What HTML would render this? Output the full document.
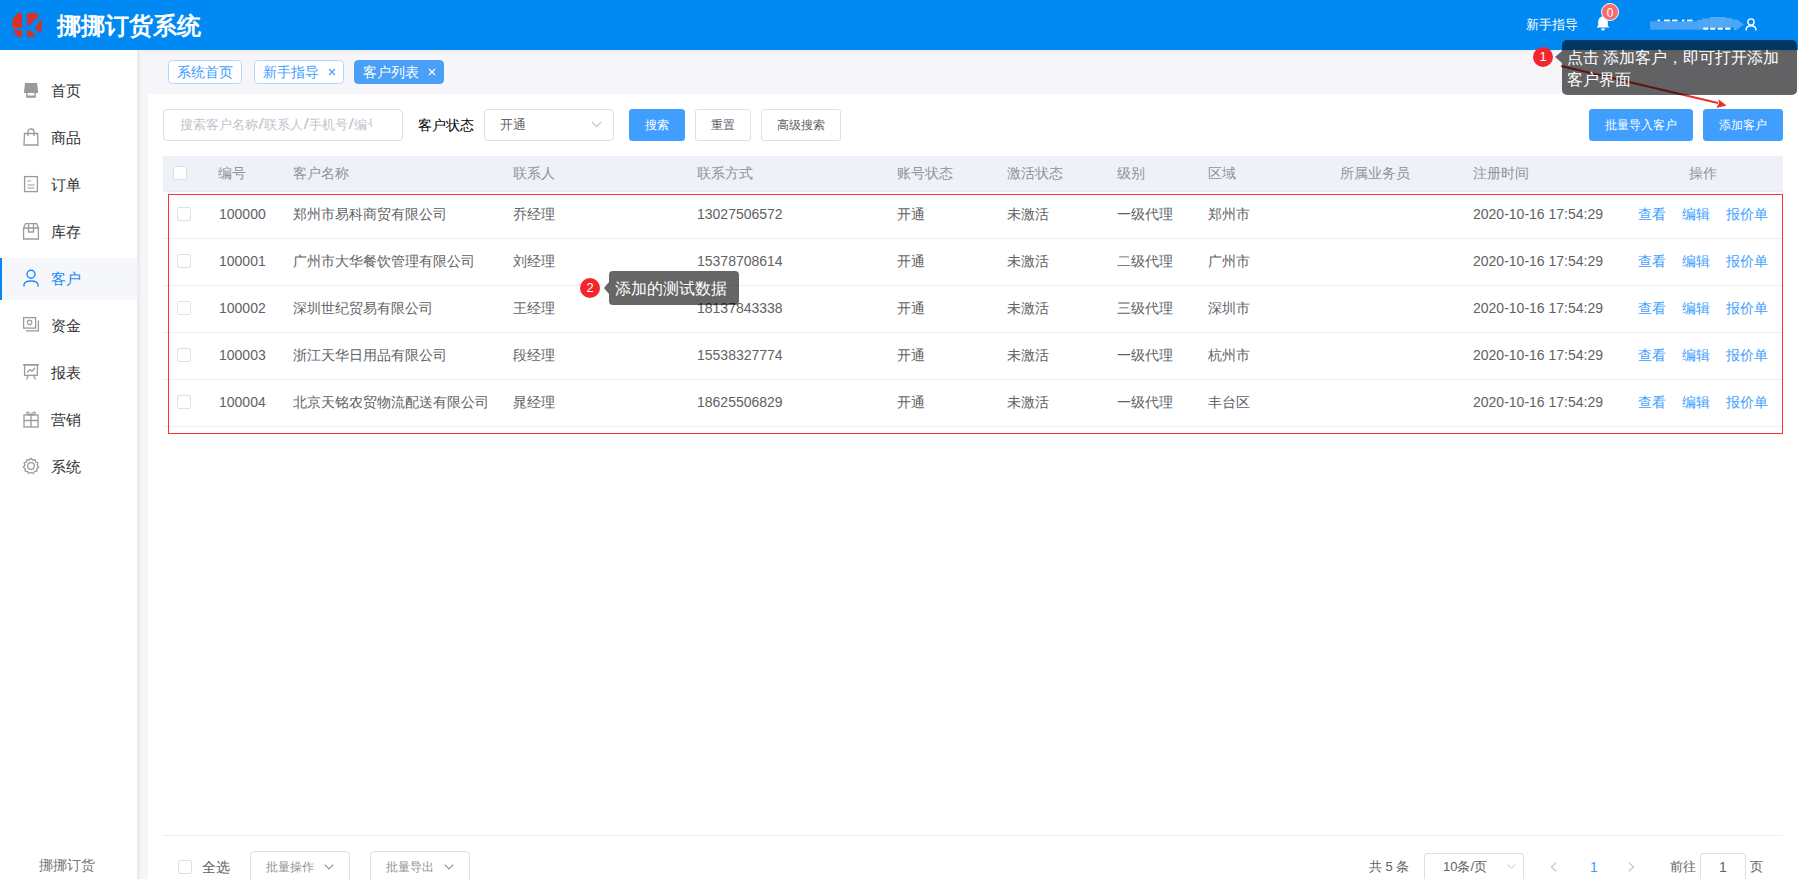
<!DOCTYPE html>
<html><head><meta charset="utf-8"><title>挪挪订货系统</title>
<style>
html,body{margin:0;padding:0;}
body{width:1798px;height:879px;overflow:hidden;position:relative;background:#fff;font-family:"Liberation Sans", sans-serif;}
.t{position:absolute;white-space:nowrap;}
.b{position:absolute;}
</style></head><body>
<div class="b" style="left:0px;top:0px;width:1798px;height:50px;background:#0089f2;"></div>
<svg class="b" style="left:8px;top:8px" width="40" height="34" viewBox="8 8 40 34">
<defs><clipPath id="lc"><circle cx="27" cy="24.9" r="15"/></clipPath></defs>
<g clip-path="url(#lc)" fill="#d8312a">
<polygon points="0,12.95 22.1,12.95 22.1,27.7 0,27.7"/>
<polygon points="0,28.9 22.1,30.2 22.1,36.9 0,36.9"/>
<polygon points="27,12.95 42.75,12.95 27,27"/>
<polygon points="34.9,28.1 45,13.9 45,38.9"/>
<polygon points="27,30.8 31.4,30.8 35.9,36.9 27,36.9"/>
</g>
</svg>
<div class="t" style="left:57px;top:11.0px;font-size:24px;line-height:30px;color:#fff;font-weight:bold;">挪挪订货系统</div>
<div class="t" style="left:1526px;top:14.5px;font-size:13px;line-height:20px;color:#fff;">新手指导</div>
<svg class="b" style="left:1596px;top:16px" width="14" height="15" viewBox="0 0 14 15">
<path d="M7 0.5 C3.8 0.5 2.2 3 2.2 6 L2.2 9.5 L0.6 11.6 L13.4 11.6 L11.8 9.5 L11.8 6 C11.8 3 10.2 0.5 7 0.5Z" fill="#fff"/>
<path d="M5 12.6 L9 12.6 C9 14 8 14.6 7 14.6 C6 14.6 5 14 5 12.6Z" fill="#fff"/>
</svg>
<div class="b" style="left:1601px;top:3px;width:16px;height:16px;border-radius:50%;background:#f56c6c;border:1px solid #fff;color:#fff;font-size:12px;line-height:19px;text-align:center;font-family:'Liberation Sans',sans-serif">0</div>
<svg class="b" style="left:1640px;top:8px" width="110" height="30" viewBox="1640 8 110 30">
<rect x="1657.5" y="19.6" width="2.6" height="2" fill="#fff"/>
<rect x="1664" y="19.6" width="6" height="2" fill="#fff"/>
<rect x="1672" y="19.6" width="5.5" height="2" fill="#fff"/>
<rect x="1682" y="19.6" width="2.5" height="2" fill="#fff"/>
<rect x="1687" y="19.6" width="5.5" height="2" fill="#fff"/>
<rect x="1703" y="27" width="5.5" height="2.8" rx="1.2" fill="#fff"/><rect x="1710" y="27" width="5.5" height="2.8" rx="1.2" fill="#fff"/><rect x="1717.5" y="27" width="5.5" height="2.8" rx="1.2" fill="#fff"/><rect x="1725" y="27" width="5.5" height="2.8" rx="1.2" fill="#fff"/><rect x="1734" y="27.5" width="2" height="2.2" fill="#fff"/>
<rect x="1650" y="21.4" width="15" height="8.3" fill="#44a1f4"/>
<rect x="1665" y="21.4" width="15" height="8.3" fill="#48a3f4"/>
<rect x="1680" y="21.4" width="17" height="8.3" fill="#4aa4f4"/>
<path d="M1697 29.7 L1697 20 L1702 20 L1702 18.5 L1710 18.5 L1710 17 L1726 17 L1726 18 L1732 18 L1732 19.5 L1737 19.5 L1743.8 24.5 L1737 29.7 L1734 29.7 L1734 27.5 L1703 27.5 L1703 29.7Z" fill="#4ea7f5"/>
<rect x="1710" y="17" width="16" height="10.5" fill="#52a9f5"/>
</svg>
<svg class="b" style="left:1745px;top:18px" width="12" height="13" viewBox="0 0 12 13">
<circle cx="6" cy="4" r="3.1" fill="none" stroke="#fff" stroke-width="1.4"/>
<path d="M1 12.5 C1 9.2 3 7.8 6 7.8 C9 7.8 11 9.2 11 12.5" fill="none" stroke="#fff" stroke-width="1.4"/>
</svg>
<div class="b" style="left:0px;top:50px;width:137px;height:829px;background:#fff;"></div>
<div class="b" style="left:0px;top:258px;width:137px;height:42px;background:#f5f7fb;"></div>
<div class="b" style="left:0px;top:258px;width:2px;height:42px;background:#0a84f0;"></div>
<div class="t" style="left:51px;top:81.0px;font-size:15px;line-height:20px;color:#303133;">首页</div>
<div class="t" style="left:51px;top:128.0px;font-size:15px;line-height:20px;color:#303133;">商品</div>
<div class="t" style="left:51px;top:175.0px;font-size:15px;line-height:20px;color:#303133;">订单</div>
<div class="t" style="left:51px;top:222.0px;font-size:15px;line-height:20px;color:#303133;">库存</div>
<div class="t" style="left:51px;top:269.0px;font-size:15px;line-height:20px;color:#1989fa;">客户</div>
<div class="t" style="left:51px;top:316.0px;font-size:15px;line-height:20px;color:#303133;">资金</div>
<div class="t" style="left:51px;top:363.0px;font-size:15px;line-height:20px;color:#303133;">报表</div>
<div class="t" style="left:51px;top:410.0px;font-size:15px;line-height:20px;color:#303133;">营销</div>
<div class="t" style="left:51px;top:457.0px;font-size:15px;line-height:20px;color:#303133;">系统</div>
<svg class="b" style="left:22px;top:82px" width="18" height="18" viewBox="0 0 18 18"><path d="M3 1 L15.1 1 L16.2 11 L1.9 11Z" fill="#9a9a9a"/><rect x="4.2" y="10.5" width="9.6" height="5.3" fill="#9a9a9a"/><path d="M5.6 13.6 L5.6 11.3 Q6.5 10 7.5 11.3 Q9 10 10.5 11.3 Q11.5 10 12.4 11.3 L12.4 13.6Z" fill="#fff"/></svg>
<svg class="b" style="left:22px;top:128px" width="18" height="18" viewBox="0 0 18 18"><path d="M2.5 5.5 L15.5 5.5 L16 17 L2 17Z" fill="none" stroke="#9a9a9a" stroke-width="1.3"/><path d="M6 8 L6 3.5 Q6 1 9 1 Q12 1 12 3.5 L12 8" fill="none" stroke="#9a9a9a" stroke-width="1.3"/></svg>
<svg class="b" style="left:22px;top:175px" width="18" height="18" viewBox="0 0 18 18"><rect x="2.6" y="1.6" width="12.8" height="15" fill="none" stroke="#9a9a9a" stroke-width="1.3"/><path d="M5.5 6 L9 6 M5.5 10 L12.5 10 M5.5 13 L12.5 13" stroke="#9a9a9a" stroke-width="1.2"/></svg>
<svg class="b" style="left:22px;top:222px" width="18" height="18" viewBox="0 0 18 18"><path d="M1.6 6 L3.5 1.6 L14.5 1.6 L16.4 6 L16.4 17 L1.6 17Z M1.6 6 L16.4 6" fill="none" stroke="#9a9a9a" stroke-width="1.3"/><path d="M6.5 1.6 L6.5 10 L11.5 10 L11.5 1.6" fill="none" stroke="#9a9a9a" stroke-width="1.3"/></svg>
<svg class="b" style="left:22px;top:316px" width="18" height="18" viewBox="0 0 18 18"><rect x="1.6" y="1.6" width="12" height="10.5" fill="none" stroke="#9a9a9a" stroke-width="1.3"/><path d="M4 14.8 L16.4 14.8 L16.4 4.5" fill="none" stroke="#9a9a9a" stroke-width="1.3"/><circle cx="7.6" cy="6.4" r="2.2" fill="none" stroke="#9a9a9a" stroke-width="1.2"/></svg>
<svg class="b" style="left:22px;top:363px" width="18" height="18" viewBox="0 0 18 18"><path d="M1 1.8 L17 1.8" stroke="#9a9a9a" stroke-width="1.4"/><rect x="2.6" y="1.8" width="12.8" height="10.5" fill="none" stroke="#9a9a9a" stroke-width="1.3"/><path d="M5 9.5 L8 6.5 L10 8.2 L13 5" fill="none" stroke="#9a9a9a" stroke-width="1.2"/><path d="M6.5 12.3 L4.5 16.5 M11.5 12.3 L13.5 16.5" stroke="#9a9a9a" stroke-width="1.3"/></svg>
<svg class="b" style="left:22px;top:410px" width="18" height="18" viewBox="0 0 18 18"><rect x="2" y="5" width="14" height="12" fill="none" stroke="#9a9a9a" stroke-width="1.3"/><path d="M2 10.5 L16 10.5 M9 5 L9 17" stroke="#9a9a9a" stroke-width="1.3"/><path d="M9 5 Q6 0.5 4.8 3 Q4.5 5 9 5 Q13.5 5 13.2 3 Q12 0.5 9 5" fill="none" stroke="#9a9a9a" stroke-width="1.2"/></svg>
<svg class="b" style="left:22px;top:457px" width="18" height="18" viewBox="0 0 18 18"><path d="M9 1.3 L10.6 3 L13 2.6 L13.6 5 L15.9 5.9 L15.2 8.3 L16.7 10.2 L14.8 11.7 L14.9 14.1 L12.5 14.4 L11.3 16.5 L9 15.5 L6.7 16.5 L5.5 14.4 L3.1 14.1 L3.2 11.7 L1.3 10.2 L2.8 8.3 L2.1 5.9 L4.4 5 L5 2.6 L7.4 3Z" fill="none" stroke="#9a9a9a" stroke-width="1.3" stroke-linejoin="round"/><circle cx="9" cy="9" r="3.3" fill="none" stroke="#9a9a9a" stroke-width="1.3"/></svg>
<svg class="b" style="left:22px;top:269px" width="18" height="18" viewBox="0 0 18 18"><circle cx="9" cy="5.3" r="4" fill="none" stroke="#1989fa" stroke-width="1.4"/><path d="M2 17.5 L2 16 Q2 12 9 12 Q16 12 16 16 L16 17.5" fill="none" stroke="#1989fa" stroke-width="1.4"/></svg>
<div class="t" style="left:67px;top:855.0px;font-size:14px;line-height:20px;color:#777;transform:translateX(-50%);">挪挪订货</div>
<div class="b" style="left:137px;top:50px;width:1661px;height:829px;background:#f5f5fa;"></div>
<div class="b" style="left:137px;top:50px;width:1661px;height:4px;background:linear-gradient(to bottom,#ededf2,#f5f5fa);"></div>
<div class="b" style="left:137px;top:50px;width:4px;height:829px;background:linear-gradient(to right,#ebebeb 0,#ededed 60%,#f5f5fa);"></div>
<div class="b" style="left:168px;top:60px;width:72px;height:22px;border-radius:4px;background:#fff;border:1px solid #b3d8ff;color:#409eff;"></div>
<div class="t" style="left:177px;top:62.0px;font-size:14px;line-height:20px;color:#409eff;">系统首页</div>
<div class="b" style="left:254px;top:60px;width:88px;height:22px;border-radius:4px;background:#fff;border:1px solid #b3d8ff;color:#409eff;"></div>
<div class="t" style="left:263px;top:62.0px;font-size:14px;line-height:20px;color:#409eff;">新手指导</div>
<svg class="b" style="left:328px;top:68px" width="8" height="8" viewBox="0 0 8 8"><path d="M1 1L7 7M7 1L1 7" stroke="#409eff" stroke-width="1.1"/></svg>
<div class="b" style="left:354px;top:60px;width:88px;height:22px;border-radius:4px;background:#4aa0f7;border:1px solid #4aa0f7;color:#fff;"></div>
<div class="t" style="left:363px;top:62.0px;font-size:14px;line-height:20px;color:#fff;">客户列表</div>
<svg class="b" style="left:428px;top:68px" width="8" height="8" viewBox="0 0 8 8"><path d="M1 1L7 7M7 1L1 7" stroke="#fff" stroke-width="1.1"/></svg>
<div class="b" style="left:148px;top:94px;width:1650px;height:785px;background:#fff;"></div>
<div class="b" style="left:163px;top:109px;width:238px;height:30px;border:1px solid #dcdfe6;border-radius:4px;background:#fff;"></div>
<div class="t" style="left:179.5px;top:115.0px;font-size:13px;line-height:20px;color:#c0c4cc;width:192px;overflow:hidden;white-space:nowrap;">搜索客户名称<span style="display:inline-block;width:6.3px;text-align:center;font-size:15.5px;line-height:10px;transform:scaleX(1.25)">/</span>联系人<span style="display:inline-block;width:6.3px;text-align:center;font-size:15.5px;line-height:10px;transform:scaleX(1.25)">/</span>手机号<span style="display:inline-block;width:6.3px;text-align:center;font-size:15.5px;line-height:10px;transform:scaleX(1.25)">/</span>编号</div>
<div class="t" style="left:418px;top:115.0px;font-size:14px;line-height:20px;color:#000;">客户状态</div>
<div class="b" style="left:484px;top:109px;width:128px;height:30px;border:1px solid #dcdfe6;border-radius:4px;background:#fff;"></div>
<div class="t" style="left:500px;top:115.0px;font-size:13px;line-height:20px;color:#606266;">开通</div>
<svg class="b" style="left:591px;top:121px" width="11" height="7" viewBox="0 0 11 7"><path d="M0.8 0.8 L5.5 5.6 L10.2 0.8" fill="none" stroke="#c0c4cc" stroke-width="1.1"/></svg>
<div class="b" style="left:629px;top:109px;width:54px;height:30px;border-radius:3px;background:#409eff;border:1px solid #409eff;"></div>
<div class="t" style="left:657.0px;top:115.0px;font-size:12px;line-height:20px;color:#fff;transform:translateX(-50%);white-space:nowrap;">搜索</div>
<div class="b" style="left:695px;top:109px;width:54px;height:30px;border-radius:3px;background:#fff;border:1px solid #dcdfe6;"></div>
<div class="t" style="left:723.0px;top:115.0px;font-size:12px;line-height:20px;color:#606266;transform:translateX(-50%);white-space:nowrap;">重置</div>
<div class="b" style="left:761px;top:109px;width:78px;height:30px;border-radius:3px;background:#fff;border:1px solid #dcdfe6;"></div>
<div class="t" style="left:801.0px;top:115.0px;font-size:12px;line-height:20px;color:#606266;transform:translateX(-50%);white-space:nowrap;">高级搜索</div>
<div class="b" style="left:1589px;top:109px;width:102px;height:30px;border-radius:3px;background:#409eff;border:1px solid #409eff;"></div>
<div class="t" style="left:1641.0px;top:115.0px;font-size:12px;line-height:20px;color:#fff;transform:translateX(-50%);white-space:nowrap;">批量导入客户</div>
<div class="b" style="left:1703px;top:109px;width:78px;height:30px;border-radius:3px;background:#409eff;border:1px solid #409eff;"></div>
<div class="t" style="left:1743.0px;top:115.0px;font-size:12px;line-height:20px;color:#fff;transform:translateX(-50%);white-space:nowrap;">添加客户</div>
<div class="b" style="left:163px;top:156px;width:1620px;height:36px;background:#eef1f8;"></div>
<div class="b" style="left:163px;top:191px;width:1620px;height:1px;background:#e8ebf3;"></div>
<div class="b" style="left:173px;top:166px;width:12px;height:12px;border:1px solid #dcdfe6;border-radius:2px;background:#fff"></div>
<div class="t" style="left:218px;top:163.0px;font-size:14px;line-height:20px;color:#909399;">编号</div>
<div class="t" style="left:293px;top:163.0px;font-size:14px;line-height:20px;color:#909399;">客户名称</div>
<div class="t" style="left:513px;top:163.0px;font-size:14px;line-height:20px;color:#909399;">联系人</div>
<div class="t" style="left:697px;top:163.0px;font-size:14px;line-height:20px;color:#909399;">联系方式</div>
<div class="t" style="left:897px;top:163.0px;font-size:14px;line-height:20px;color:#909399;">账号状态</div>
<div class="t" style="left:1007px;top:163.0px;font-size:14px;line-height:20px;color:#909399;">激活状态</div>
<div class="t" style="left:1117px;top:163.0px;font-size:14px;line-height:20px;color:#909399;">级别</div>
<div class="t" style="left:1208px;top:163.0px;font-size:14px;line-height:20px;color:#909399;">区域</div>
<div class="t" style="left:1340px;top:163.0px;font-size:14px;line-height:20px;color:#909399;">所属业务员</div>
<div class="t" style="left:1473px;top:163.0px;font-size:14px;line-height:20px;color:#909399;">注册时间</div>
<div class="t" style="left:1703px;top:163.0px;font-size:14px;line-height:20px;color:#909399;transform:translateX(-50%);">操作</div>
<div class="b" style="left:163px;top:238px;width:1620px;height:1px;background:#ebeef5;"></div>
<div class="b" style="left:177px;top:207px;width:12px;height:12px;border:1px solid #dcdfe6;border-radius:2px;background:#fff"></div>
<div class="t" style="left:219px;top:204.0px;font-size:14px;line-height:20px;color:#606266;">100000</div>
<div class="t" style="left:293px;top:204.0px;font-size:14px;line-height:20px;color:#606266;">郑州市易科商贸有限公司</div>
<div class="t" style="left:513px;top:204.0px;font-size:14px;line-height:20px;color:#606266;">乔经理</div>
<div class="t" style="left:697px;top:204.0px;font-size:14px;line-height:20px;color:#606266;">13027506572</div>
<div class="t" style="left:897px;top:204.0px;font-size:14px;line-height:20px;color:#606266;">开通</div>
<div class="t" style="left:1007px;top:204.0px;font-size:14px;line-height:20px;color:#606266;">未激活</div>
<div class="t" style="left:1117px;top:204.0px;font-size:14px;line-height:20px;color:#606266;">一级代理</div>
<div class="t" style="left:1208px;top:204.0px;font-size:14px;line-height:20px;color:#606266;">郑州市</div>
<div class="t" style="left:1473px;top:204.0px;font-size:14px;line-height:20px;color:#606266;">2020-10-16 17:54:29</div>
<div class="t" style="left:1638px;top:204.0px;font-size:14px;line-height:20px;color:#409eff;">查看</div>
<div class="t" style="left:1682px;top:204.0px;font-size:14px;line-height:20px;color:#409eff;">编辑</div>
<div class="t" style="left:1726px;top:204.0px;font-size:14px;line-height:20px;color:#409eff;">报价单</div>
<div class="b" style="left:163px;top:285px;width:1620px;height:1px;background:#ebeef5;"></div>
<div class="b" style="left:177px;top:254px;width:12px;height:12px;border:1px solid #dcdfe6;border-radius:2px;background:#fff"></div>
<div class="t" style="left:219px;top:251.0px;font-size:14px;line-height:20px;color:#606266;">100001</div>
<div class="t" style="left:293px;top:251.0px;font-size:14px;line-height:20px;color:#606266;">广州市大华餐饮管理有限公司</div>
<div class="t" style="left:513px;top:251.0px;font-size:14px;line-height:20px;color:#606266;">刘经理</div>
<div class="t" style="left:697px;top:251.0px;font-size:14px;line-height:20px;color:#606266;">15378708614</div>
<div class="t" style="left:897px;top:251.0px;font-size:14px;line-height:20px;color:#606266;">开通</div>
<div class="t" style="left:1007px;top:251.0px;font-size:14px;line-height:20px;color:#606266;">未激活</div>
<div class="t" style="left:1117px;top:251.0px;font-size:14px;line-height:20px;color:#606266;">二级代理</div>
<div class="t" style="left:1208px;top:251.0px;font-size:14px;line-height:20px;color:#606266;">广州市</div>
<div class="t" style="left:1473px;top:251.0px;font-size:14px;line-height:20px;color:#606266;">2020-10-16 17:54:29</div>
<div class="t" style="left:1638px;top:251.0px;font-size:14px;line-height:20px;color:#409eff;">查看</div>
<div class="t" style="left:1682px;top:251.0px;font-size:14px;line-height:20px;color:#409eff;">编辑</div>
<div class="t" style="left:1726px;top:251.0px;font-size:14px;line-height:20px;color:#409eff;">报价单</div>
<div class="b" style="left:163px;top:332px;width:1620px;height:1px;background:#ebeef5;"></div>
<div class="b" style="left:177px;top:301px;width:12px;height:12px;border:1px solid #dcdfe6;border-radius:2px;background:#fff"></div>
<div class="t" style="left:219px;top:298.0px;font-size:14px;line-height:20px;color:#606266;">100002</div>
<div class="t" style="left:293px;top:298.0px;font-size:14px;line-height:20px;color:#606266;">深圳世纪贸易有限公司</div>
<div class="t" style="left:513px;top:298.0px;font-size:14px;line-height:20px;color:#606266;">王经理</div>
<div class="t" style="left:697px;top:298.0px;font-size:14px;line-height:20px;color:#606266;">18137843338</div>
<div class="t" style="left:897px;top:298.0px;font-size:14px;line-height:20px;color:#606266;">开通</div>
<div class="t" style="left:1007px;top:298.0px;font-size:14px;line-height:20px;color:#606266;">未激活</div>
<div class="t" style="left:1117px;top:298.0px;font-size:14px;line-height:20px;color:#606266;">三级代理</div>
<div class="t" style="left:1208px;top:298.0px;font-size:14px;line-height:20px;color:#606266;">深圳市</div>
<div class="t" style="left:1473px;top:298.0px;font-size:14px;line-height:20px;color:#606266;">2020-10-16 17:54:29</div>
<div class="t" style="left:1638px;top:298.0px;font-size:14px;line-height:20px;color:#409eff;">查看</div>
<div class="t" style="left:1682px;top:298.0px;font-size:14px;line-height:20px;color:#409eff;">编辑</div>
<div class="t" style="left:1726px;top:298.0px;font-size:14px;line-height:20px;color:#409eff;">报价单</div>
<div class="b" style="left:163px;top:379px;width:1620px;height:1px;background:#ebeef5;"></div>
<div class="b" style="left:177px;top:348px;width:12px;height:12px;border:1px solid #dcdfe6;border-radius:2px;background:#fff"></div>
<div class="t" style="left:219px;top:345.0px;font-size:14px;line-height:20px;color:#606266;">100003</div>
<div class="t" style="left:293px;top:345.0px;font-size:14px;line-height:20px;color:#606266;">浙江天华日用品有限公司</div>
<div class="t" style="left:513px;top:345.0px;font-size:14px;line-height:20px;color:#606266;">段经理</div>
<div class="t" style="left:697px;top:345.0px;font-size:14px;line-height:20px;color:#606266;">15538327774</div>
<div class="t" style="left:897px;top:345.0px;font-size:14px;line-height:20px;color:#606266;">开通</div>
<div class="t" style="left:1007px;top:345.0px;font-size:14px;line-height:20px;color:#606266;">未激活</div>
<div class="t" style="left:1117px;top:345.0px;font-size:14px;line-height:20px;color:#606266;">一级代理</div>
<div class="t" style="left:1208px;top:345.0px;font-size:14px;line-height:20px;color:#606266;">杭州市</div>
<div class="t" style="left:1473px;top:345.0px;font-size:14px;line-height:20px;color:#606266;">2020-10-16 17:54:29</div>
<div class="t" style="left:1638px;top:345.0px;font-size:14px;line-height:20px;color:#409eff;">查看</div>
<div class="t" style="left:1682px;top:345.0px;font-size:14px;line-height:20px;color:#409eff;">编辑</div>
<div class="t" style="left:1726px;top:345.0px;font-size:14px;line-height:20px;color:#409eff;">报价单</div>
<div class="b" style="left:163px;top:426px;width:1620px;height:1px;background:#ebeef5;"></div>
<div class="b" style="left:177px;top:395px;width:12px;height:12px;border:1px solid #dcdfe6;border-radius:2px;background:#fff"></div>
<div class="t" style="left:219px;top:392.0px;font-size:14px;line-height:20px;color:#606266;">100004</div>
<div class="t" style="left:293px;top:392.0px;font-size:14px;line-height:20px;color:#606266;">北京天铭农贸物流配送有限公司</div>
<div class="t" style="left:513px;top:392.0px;font-size:14px;line-height:20px;color:#606266;">晁经理</div>
<div class="t" style="left:697px;top:392.0px;font-size:14px;line-height:20px;color:#606266;">18625506829</div>
<div class="t" style="left:897px;top:392.0px;font-size:14px;line-height:20px;color:#606266;">开通</div>
<div class="t" style="left:1007px;top:392.0px;font-size:14px;line-height:20px;color:#606266;">未激活</div>
<div class="t" style="left:1117px;top:392.0px;font-size:14px;line-height:20px;color:#606266;">一级代理</div>
<div class="t" style="left:1208px;top:392.0px;font-size:14px;line-height:20px;color:#606266;">丰台区</div>
<div class="t" style="left:1473px;top:392.0px;font-size:14px;line-height:20px;color:#606266;">2020-10-16 17:54:29</div>
<div class="t" style="left:1638px;top:392.0px;font-size:14px;line-height:20px;color:#409eff;">查看</div>
<div class="t" style="left:1682px;top:392.0px;font-size:14px;line-height:20px;color:#409eff;">编辑</div>
<div class="t" style="left:1726px;top:392.0px;font-size:14px;line-height:20px;color:#409eff;">报价单</div>
<div class="b" style="left:168px;top:194px;width:1613px;height:238px;border:1px solid #ff3030;box-sizing:border-box;width:1615px;height:240px;"></div>
<div class="b" style="left:163px;top:835px;width:1620px;height:1px;background:#ebeef5;"></div>
<div class="b" style="left:178px;top:860px;width:12px;height:12px;border:1px solid #dcdfe6;border-radius:2px;background:#fff"></div>
<div class="t" style="left:202px;top:857.0px;font-size:14px;line-height:20px;color:#606266;">全选</div>
<div class="b" style="left:250px;top:851px;width:98px;height:40px;border:1px solid #dcdfe6;border-radius:4px;background:#fff"></div>
<div class="t" style="left:266px;top:857.0px;font-size:12px;line-height:20px;color:#909399;">批量操作</div>
<svg class="b" style="left:324px;top:864px" width="10" height="6" viewBox="0 0 10 6"><path d="M0.8 0.6 L5 5 L9.2 0.6" fill="none" stroke="#909399" stroke-width="1.1"/></svg>
<div class="b" style="left:370px;top:851px;width:98px;height:40px;border:1px solid #dcdfe6;border-radius:4px;background:#fff"></div>
<div class="t" style="left:386px;top:857.0px;font-size:12px;line-height:20px;color:#909399;">批量导出</div>
<svg class="b" style="left:444px;top:864px" width="10" height="6" viewBox="0 0 10 6"><path d="M0.8 0.6 L5 5 L9.2 0.6" fill="none" stroke="#909399" stroke-width="1.1"/></svg>
<div class="t" style="left:1369px;top:857.0px;font-size:13px;line-height:20px;color:#606266;">共 5 条</div>
<div class="b" style="left:1424px;top:853px;width:98px;height:40px;border:1px solid #dcdfe6;border-radius:3px;background:#fff"></div>
<div class="t" style="left:1443px;top:857.0px;font-size:13px;line-height:20px;color:#606266;">10条/页</div>
<svg class="b" style="left:1507px;top:864px" width="9" height="5" viewBox="0 0 9 5"><path d="M0.6 0.6 L4.5 4.4 L8.4 0.6" fill="none" stroke="#c0c4cc" stroke-width="1"/></svg>
<svg class="b" style="left:1550px;top:862px" width="7" height="10" viewBox="0 0 7 10"><path d="M6.2 0.6 L1.4 5 L6.2 9.4" fill="none" stroke="#c0c4cc" stroke-width="1.2"/></svg>
<div class="t" style="left:1590px;top:857.0px;font-size:14px;line-height:20px;color:#409eff;">1</div>
<svg class="b" style="left:1628px;top:862px" width="7" height="10" viewBox="0 0 7 10"><path d="M0.8 0.6 L5.6 5 L0.8 9.4" fill="none" stroke="#c0c4cc" stroke-width="1.2"/></svg>
<div class="t" style="left:1670px;top:857.0px;font-size:13px;line-height:20px;color:#606266;">前往</div>
<div class="b" style="left:1700px;top:853px;width:44px;height:40px;border:1px solid #dcdfe6;border-radius:3px;background:#fff"></div>
<div class="t" style="left:1719px;top:857.0px;font-size:14px;line-height:20px;color:#606266;">1</div>
<div class="t" style="left:1750px;top:857.0px;font-size:13px;line-height:20px;color:#606266;">页</div>
<svg class="b" style="left:0;top:0" width="1798" height="879" viewBox="0 0 1798 879">
<line x1="1561" y1="66" x2="1718" y2="103" stroke="#e8302c" stroke-width="2"/>
<path d="M1726.5 105.5 L1718.5 99.3 L1719 103 L1716.3 108Z" fill="#e8302c"/>
</svg>
<div class="b" style="left:1562px;top:40px;width:235px;height:55px;border-radius:5px;background:rgba(0,0,0,0.6)"></div>
<div class="b" style="left:1555px;top:51px;width:0;height:0;border-top:6px solid transparent;border-bottom:6px solid transparent;border-right:7px solid rgba(0,0,0,0.6)"></div>
<div class="t" style="left:1567px;top:47px;width:228px;font-size:16px;line-height:22px;color:#fff;white-space:normal;word-break:break-all">点击 添加客户，即可打开添加客户界面</div>
<div class="b" style="left:1533px;top:47px;width:20px;height:20px;border-radius:50%;background:#f5262b;color:#fff;font-size:13px;line-height:20px;text-align:center">1</div>
<div class="b" style="left:609px;top:271px;width:130px;height:34px;border-radius:4px;background:rgba(0,0,0,0.6)"></div>
<div class="b" style="left:604px;top:282px;width:0;height:0;border-top:6px solid transparent;border-bottom:6px solid transparent;border-right:5px solid rgba(0,0,0,0.6)"></div>
<div class="t" style="left:615px;top:278.0px;font-size:16px;line-height:22px;color:#fff;">添加的测试数据</div>
<div class="b" style="left:580px;top:278px;width:20px;height:20px;border-radius:50%;background:#f5262b;color:#fff;font-size:13px;line-height:20px;text-align:center">2</div>
</body></html>
